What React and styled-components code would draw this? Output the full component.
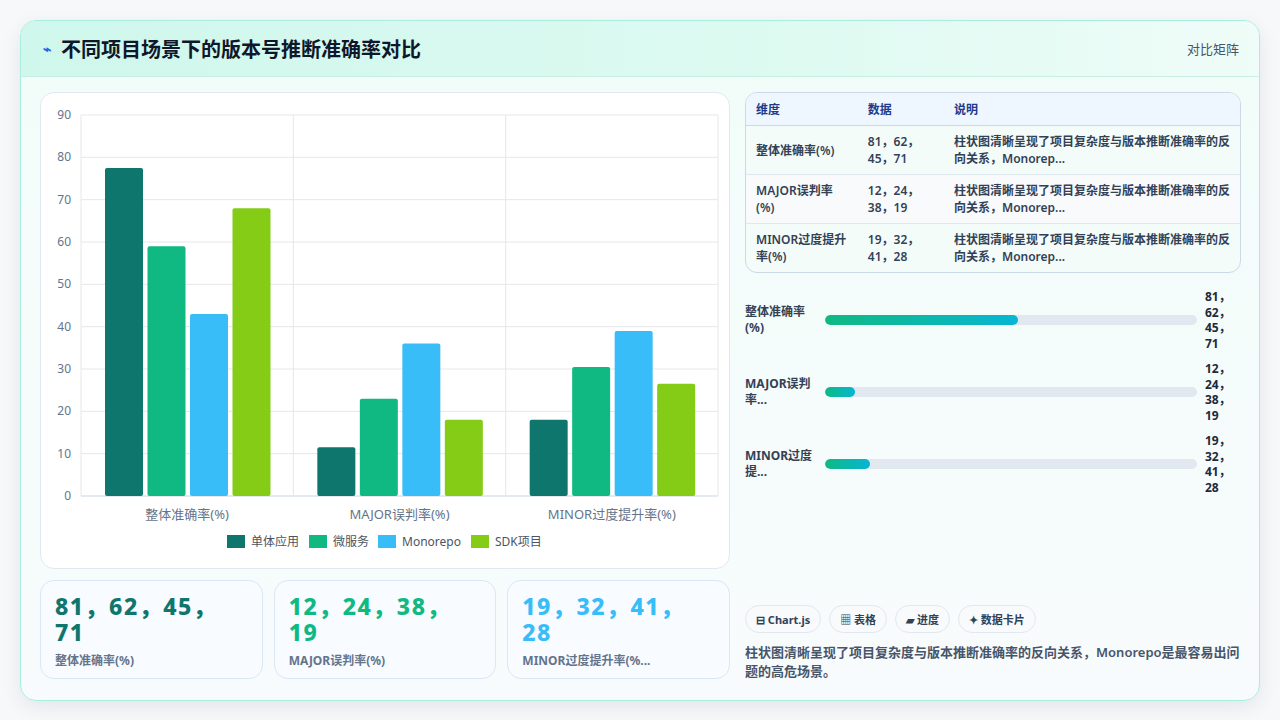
import styled, { createGlobalStyle } from 'styled-components'

const Global = createGlobalStyle`
  html, body { margin: 0; padding: 0; background: #f6f8fa; }
  body { font-family: "Noto Sans", "Noto Sans CJK SC", sans-serif; color: #1e293b; }
`

const COLORS = ['#0f766e', '#10b981', '#38bdf8', '#84cc16']
const SERIES = ['单体应用', '微服务', 'Monorepo', 'SDK项目']
const GROUPS = [
  { label: '整体准确率(%)', values: [77.5, 59, 43, 68] },
  { label: 'MAJOR误判率(%)', values: [11.5, 23, 36, 18] },
  { label: 'MINOR过度提升率(%)', values: [18, 30.5, 39, 26.5] },
]

const rows = [
  { dim: '整体准确率(%)', data: '81，62，\n45，71' },
  { dim: 'MAJOR误判率\n(%)', data: '12，24，\n38，19' },
  { dim: 'MINOR过度提升\n率(%)', data: '19，32，\n41，28' },
]
const desc = '柱状图清晰呈现了项目复杂度与版本推断准确率的反\n向关系，Monorep...'

const progress = [
  { label: '整体准确率\n(%)', pct: 52, value: ['81，', '62，', '45，', '71'] },
  { label: 'MAJOR误判\n率...', pct: 8, value: ['12，', '24，', '38，', '19'] },
  { label: 'MINOR过度\n提...', pct: 12, value: ['19，', '32，', '41，', '28'] },
]

const stats = [
  { value: '81，62，45，\n71', label: '整体准确率(%)', color: '#0f766e' },
  { value: '12，24，38，\n19', label: 'MAJOR误判率(%)', color: '#10b981' },
  { value: '19，32，41，\n28', label: 'MINOR过度提升率(%...', color: '#38bdf8' },
]

function Chart() {
  const left = 40, right = 677, top = 22, bottom = 403
  const unit = (bottom - top) / 90
  const gw = (right - left) / 3
  return (
    <svg width="690" height="477" viewBox="0 0 690 477">
      {Array.from({ length: 10 }, (_, i) => {
        const y = bottom - i * 10 * unit
        return (
          <g key={i}>
            <line x1={left} x2={right} y1={y} y2={y} stroke={i === 0 ? '#cbd5e1' : '#e5e7eb'} />
            <text x={left - 10} y={y + 4} textAnchor="end" fontSize="12" fill="#64748b">{i * 10}</text>
          </g>
        )
      })}
      {[0, 1, 2, 3].map(i => (
        <line key={i} x1={left + i * gw} x2={left + i * gw} y1={top} y2={bottom} stroke="#e5e7eb" />
      ))}
      {GROUPS.map((g, gi) => (
        <g key={gi}>
          {g.values.map((v, si) => (
            <rect key={si} x={left + gi * gw + 24 + si * 42.5} y={bottom - v * unit} width="38" height={v * unit} rx="2" fill={COLORS[si]} />
          ))}
          <text x={left + gi * gw + gw / 2} y={426} textAnchor="middle" fontSize="13" fill="#64748b">{g.label}</text>
        </g>
      ))}
      {(() => {
        const xs = [186, 268, 337, 430]
        return SERIES.map((s, i) => (
          <g key={s}>
            <rect x={xs[i]} y={442} width="18" height="13" fill={COLORS[i]} />
            <text x={xs[i] + 24} y={453} fontSize="12" fill="#4b5563">{s}</text>
          </g>
        ))
      })()}
    </svg>
  )
}

export default function App() {
  return (
    <>
      <Global />
      <Page>
        <Frame>
          <Header>
            <Title><Spark>⌁</Spark>不同项目场景下的版本号推断准确率对比</Title>
            <Tag>对比矩阵</Tag>
          </Header>
          <Body>
            <LeftCol>
              <ChartCard><Chart /></ChartCard>
              <StatRow>
                {stats.map(s => (
                  <StatCard key={s.label}>
                    <StatValue color={s.color}>{s.value}</StatValue>
                    <StatLabel>{s.label}</StatLabel>
                  </StatCard>
                ))}
              </StatRow>
            </LeftCol>
            <RightCol>
              <Table>
                <thead>
                  <tr><Th>维度</Th><Th>数据</Th><Th>说明</Th></tr>
                </thead>
                <tbody>
                  {rows.map(r => (
                    <tr key={r.dim}>
                      <Td>{r.dim}</Td>
                      <Td>{r.data}</Td>
                      <Td>{desc}</Td>
                    </tr>
                  ))}
                </tbody>
              </Table>
              <Bars>
                {progress.map(p => (
                  <BarRow key={p.label}>
                    <BarLabel>{p.label}</BarLabel>
                    <Track><Fill style={{ width: `${p.pct}%` }} /></Track>
                    <BarValue>{p.value.map(v => <div key={v}>{v}</div>)}</BarValue>
                  </BarRow>
                ))}
              </Bars>
              <Spacer />
              <Chips>
                <Chip>⊟ Chart.js</Chip>
                <Chip>▦ 表格</Chip>
                <Chip>▰ 进度</Chip>
                <Chip>✦ 数据卡片</Chip>
              </Chips>
              <Summary>柱状图清晰呈现了项目复杂度与版本推断准确率的反向关系，Monorepo是最容易出问题的高危场景。</Summary>
            </RightCol>
          </Body>
        </Frame>
      </Page>
    </>
  )
}

const Page = styled.div`
  width: 1280px;
  height: 720px;
  padding: 20px;
  box-sizing: border-box;
`
const Frame = styled.div`
  height: 679px;
  border: 1px solid #a7eedc;
  border-radius: 16px;
  background: linear-gradient(180deg, #f1fdf9 0%, #f8fbfd 100%);
  box-shadow: 0 6px 20px rgba(15, 23, 42, 0.08);
  overflow: hidden;
  display: flex;
  flex-direction: column;
`
const Header = styled.div`
  height: 55px;
  flex: none;
  display: flex;
  align-items: center;
  justify-content: space-between;
  padding: 0 20px;
  background: linear-gradient(90deg, #cff7ec 0%, #ddfaf1 60%, #effcf8 100%);
  border-bottom: 1px solid #c7efe4;
`
const Title = styled.h1`
  margin: 0;
  font-size: 20px;
  font-weight: 700;
  color: #0f172a;
  display: flex;
  align-items: center;
  gap: 10px;
`
const Spark = styled.span`
  color: #2563eb;
  font-size: 14px;
  margin-left: 2px;
`
const Tag = styled.span`
  font-size: 13px;
  color: #475569;
`
const Body = styled.div`
  flex: 1;
  display: flex;
  gap: 15px;
  padding: 15px 18px 17px 19px;
`
const LeftCol = styled.div`
  width: 690px;
  display: flex;
  flex-direction: column;
  gap: 11px;
`
const ChartCard = styled.div`
  height: 477px;
  background: #fff;
  border: 1px solid #e2e8f0;
  border-radius: 14px;
  box-sizing: border-box;
  overflow: hidden;
  svg { display: block; font-family: "Noto Sans", "Noto Sans CJK SC", sans-serif; }
`
const StatRow = styled.div`
  display: grid;
  grid-template-columns: repeat(3, 1fr);
  gap: 11px;
`
const StatCard = styled.div`
  height: 99px;
  box-sizing: border-box;
  background: #f8fbff;
  border: 1px solid #dbe7f3;
  border-radius: 14px;
  padding: 12px 14px;
`
const StatValue = styled.div`
  white-space: pre-line;
  font-size: 23px;
  line-height: 26px;
  font-weight: 800;
  letter-spacing: 1.5px;
  color: ${p => p.color};
`
const StatLabel = styled.div`
  margin-top: 6px;
  font-size: 12px;
  font-weight: 700;
  color: #64748b;
`
const RightCol = styled.div`
  flex: 1;
  display: flex;
  flex-direction: column;
`
const Table = styled.table`
  width: 100%;
  border-collapse: separate;
  border-spacing: 0;
  border: 1px solid #cbd9e6;
  border-radius: 12px;
  overflow: hidden;
  font-size: 12px;
  background: #f3fcf9;
  tbody tr:nth-child(2) td { background: #f8fafc; }
`
const Th = styled.th`
  text-align: left;
  font-weight: 700;
  color: #1e3a8a;
  background: #eef6ff;
  padding: 7px 10px;
  height: 18px;
  border-bottom: 1px solid #cbd9e6;
  &:nth-child(1) { width: 92px; }
  &:nth-child(2) { width: 68px; }
`
const Td = styled.td`
  white-space: pre;
  vertical-align: middle;
  padding: 7px 10px;
  line-height: 17px;
  font-weight: 600;
  color: #334155;
  border-bottom: 1px solid #dfe7ef;
  tr:last-child & { border-bottom: none; }
`
const Bars = styled.div`
  margin-top: 16px;
  display: flex;
  flex-direction: column;
  gap: 10px;
`
const BarRow = styled.div`
  display: flex;
  align-items: center;
  gap: 8px;
`
const BarLabel = styled.div`
  width: 72px;
  white-space: pre-line;
  font-size: 12px;
  font-weight: 700;
  line-height: 16px;
  color: #334155;
`
const Track = styled.div`
  flex: 1;
  height: 10px;
  border-radius: 5px;
  background: #e2e8f0;
  overflow: hidden;
`
const Fill = styled.div`
  height: 100%;
  border-radius: 5px;
  background: linear-gradient(90deg, #10b981, #06b6d4);
`
const BarValue = styled.div`
  width: 36px;
  font-size: 12px;
  font-weight: 700;
  line-height: 15.5px;
  color: #1e293b;
`
const Spacer = styled.div`
  flex: 1;
`
const Chips = styled.div`
  display: flex;
  gap: 8px;
`
const Chip = styled.span`
  height: 26px;
  display: inline-flex;
  align-items: center;
  padding: 0 10px;
  border: 1px solid #e2e8f0;
  border-radius: 14px;
  background: #f8fafc;
  font-size: 11px;
  font-weight: 700;
  color: #334155;
`
const Summary = styled.p`
  margin: 10px 0 2px;
  font-size: 13px;
  line-height: 19px;
  font-weight: 600;
  color: #475569;
`
